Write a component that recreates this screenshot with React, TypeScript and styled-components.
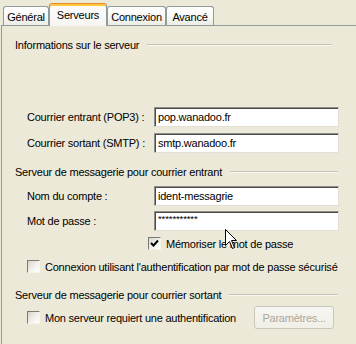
import React from "react";
import styled, { createGlobalStyle } from "styled-components";

const GlobalStyle = createGlobalStyle`
  html, body {
    margin: 0;
    padding: 0;
    background: #ece9d8;
  }
  body {
    font-family: "Liberation Sans", Arial, sans-serif;
    font-size: 11px;
    letter-spacing: -0.22px;
    color: #000;
  }
`;

const Window = styled.div`
  position: relative;
  width: 356px;
  height: 344px;
  overflow: hidden;
  background: #ece9d8;
`;

const TabStrip = styled.div`
  display: flex;
  align-items: flex-end;
  height: 25px;
  padding-left: 3px;
`;

const Tab = styled.div<{ $active?: boolean; $w: number }>`
  box-sizing: border-box;
  width: ${(p) => p.$w}px;
  height: ${(p) => (p.$active ? 23 : 19)}px;
  margin-bottom: ${(p) => (p.$active ? -1 : 0)}px;
  position: relative;
  z-index: ${(p) => (p.$active ? 2 : 1)};
  display: flex;
  align-items: center;
  justify-content: center;
  padding-top: ${(p) => (p.$active ? 0 : 1)}px;
  border: 1px solid #919b9c;
  border-bottom: none;
  border-radius: 3px 3px 0 0;
  white-space: nowrap;
  background: ${(p) =>
    p.$active
      ? "linear-gradient(#fcfcfe, #f6f5f0)"
      : "linear-gradient(#ffffff 0%, #f7f7f3 60%, #ecebe5 100%)"};
  ${(p) =>
    p.$active
      ? `border-top: 1px solid #e68b2c; box-shadow: inset 0 2px 0 #ffc83c;`
      : ""}
`;

const Panel = styled.div`
  box-sizing: border-box;
  margin-left: 1px;
  height: 319px;
  border-top: 1px solid #919b9c;
  border-left: 1px solid #919b9c;
  background: #ece9d8;
  display: flex;
  flex-direction: column;
`;

const SectionHeader = styled.div<{ $top: number; $inset: number }>`
  display: flex;
  align-items: center;
  height: 13px;
  margin-top: ${(p) => p.$top}px;
  padding-left: 13px;
  padding-right: ${(p) => p.$inset}px;
  white-space: nowrap;
`;

const HeaderRule = styled.div`
  flex: 1;
  height: 1px;
  margin-left: 8px;
  background: #c6c3b4;
  border-bottom: 1px solid #f7f6f1;
`;

const FormGrid = styled.div<{ $top: number; $gap: number }>`
  display: grid;
  grid-template-columns: 127px 185px;
  row-gap: ${(p) => p.$gap}px;
  margin-top: ${(p) => p.$top}px;
  padding-left: 25px;
  align-items: center;
`;

const Label = styled.div`
  white-space: nowrap;
`;

const TextBox = styled.div<{ $secret?: boolean }>`
  box-sizing: border-box;
  height: 20px;
  background: #fff;
  border-top: 1px solid #8f8f8a;
  border-left: 1px solid #8f8f8a;
  border-right: 1px solid #e2e0d6;
  border-bottom: 1px solid #e2e0d6;
  box-shadow: inset 1px 1px 0 #4a4a48;
  padding-left: 3px;
  display: flex;
  align-items: center;
  white-space: nowrap;
  font-size: ${(p) => (p.$secret ? 9.5 : 11)}px;
  letter-spacing: ${(p) => (p.$secret ? -0.1 : -0.22)}px;
  ${(p) => (p.$secret ? "padding-bottom: 5px;" : "")}
`;

const CheckRow = styled.div<{ $top: number; $left: number }>`
  display: flex;
  align-items: center;
  gap: 5px;
  margin-top: ${(p) => p.$top}px;
  padding-left: ${(p) => p.$left}px;
  white-space: nowrap;
`;

const Box = styled.span`
  box-sizing: border-box;
  width: 13px;
  height: 13px;
  flex: none;
  border-top: 1px solid #7b7b75;
  border-left: 1px solid #7b7b75;
  border-right: 1px solid #f4f3ee;
  border-bottom: 1px solid #f4f3ee;
  background: linear-gradient(135deg, #d8d6cc 0%, #f2f1ec 55%, #ffffff 100%);
  display: flex;
  align-items: center;
  justify-content: center;
`;

const BottomRow = styled.div`
  display: flex;
  align-items: center;
  justify-content: space-between;
  margin-top: 5px;
  padding-left: 25px;
  padding-right: 22px;
`;

const DisabledButton = styled.div`
  box-sizing: border-box;
  width: 80px;
  height: 23px;
  border: 1px solid #c9c7ba;
  border-radius: 3px;
  background: linear-gradient(#f6f5f1, #f1efe6);
  color: #aca899;
  display: flex;
  align-items: center;
  justify-content: center;
`;

const Pointer = styled.svg`
  position: absolute;
  left: 225px;
  top: 229px;
  pointer-events: none;
`;

function CheckBox({ checked }: { checked?: boolean }) {
  return (
    <Box>
      {checked && (
        <svg width="9" height="9" viewBox="0 0 9 9">
          <path d="M1 4 L3.5 6.5 L8 1.5" fill="none" stroke="#000" strokeWidth="1.9" />
        </svg>
      )}
    </Box>
  );
}

export default function App() {
  return (
    <Window>
      <GlobalStyle />
      <TabStrip>
        <Tab $w={46}>Général</Tab>
        <Tab $w={58} $active>
          Serveurs
        </Tab>
        <Tab $w={59}>Connexion</Tab>
        <Tab $w={48}>Avancé</Tab>
      </TabStrip>
      <Panel>
        <SectionHeader $top={12} $inset={24}>
          Informations sur le serveur
          <HeaderRule />
        </SectionHeader>
        <FormGrid $top={56} $gap={6}>
          <Label>Courrier entrant (POP3) :</Label>
          <TextBox>pop.wanadoo.fr</TextBox>
          <Label>Courrier sortant (SMTP) :</Label>
          <TextBox>smtp.wanadoo.fr</TextBox>
        </FormGrid>
        <SectionHeader $top={12} $inset={18}>
          Serveur de messagerie pour courrier entrant
          <HeaderRule />
        </SectionHeader>
        <FormGrid $top={8} $gap={5}>
          <Label>Nom du compte :</Label>
          <TextBox>ident-messagrie</TextBox>
          <Label>Mot de passe :</Label>
          <TextBox $secret>***********</TextBox>
        </FormGrid>
        <CheckRow $top={6} $left={146}>
          <CheckBox checked />
          Mémoriser le mot de passe
        </CheckRow>
        <CheckRow $top={10} $left={25}>
          <CheckBox />
          Connexion utilisant l'authentification par mot de passe sécurisé
        </CheckRow>
        <SectionHeader $top={15} $inset={18}>
          Serveur de messagerie pour courrier sortant
          <HeaderRule />
        </SectionHeader>
        <BottomRow>
          <CheckRow $top={0} $left={0}>
            <CheckBox />
            Mon serveur requiert une authentification
          </CheckRow>
          <DisabledButton>Paramètres...</DisabledButton>
        </BottomRow>
      </Panel>
      <Pointer width="13" height="21" viewBox="0 0 13 21">
        <path
          d="M0.5 0.5 L0.5 16.5 L4.5 12.5 L7.5 19.5 L9.5 18.5 L6.5 11.5 L11.5 11.5 Z"
          fill="#fff"
          stroke="#000"
          strokeWidth="1"
        />
      </Pointer>
    </Window>
  );
}
